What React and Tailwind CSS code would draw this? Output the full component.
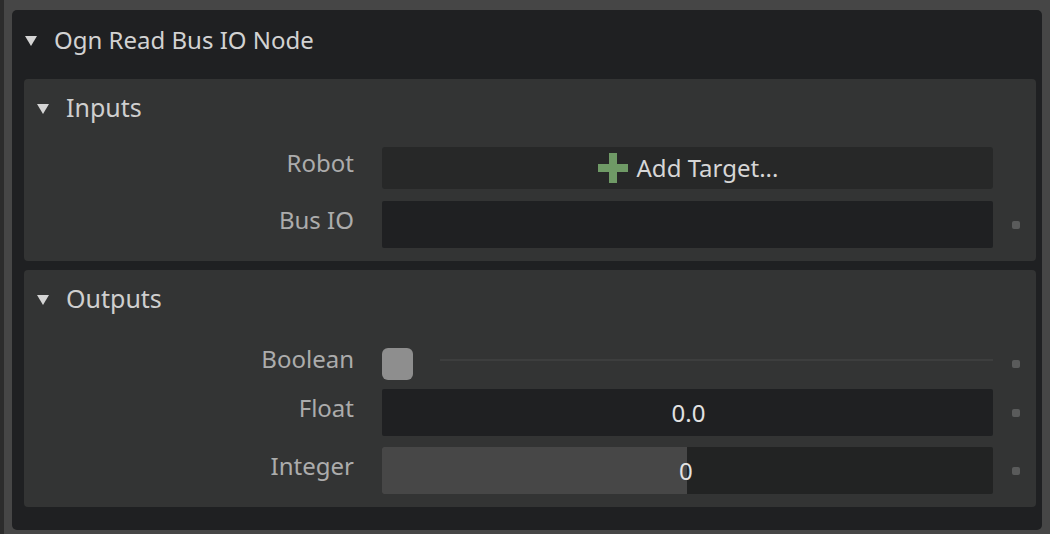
import React from "react";

const font = { fontFamily: "'Noto Sans', 'Open Sans', sans-serif" };

function Caret({ className = "" }) {
  return (
    <svg width="12" height="10" viewBox="0 0 12 10" className={className}>
      <path d="M0 0 H12 L6 10 Z" fill="#d4d4d4" />
    </svg>
  );
}

function Dot() {
  return (
    <div className="w-[43px] flex justify-center pl-[3px]">
      <div className="w-[8px] h-[8px] rounded-[2px] bg-[#5a5b5b]" />
    </div>
  );
}

function Row({ label, children, dot = true, className = "" }) {
  return (
    <div className={`flex items-center ${className}`}>
      <div className="w-[331px] text-right pr-[1px] text-[24px] leading-none text-[#acacac] -translate-y-[5px]">
        {label}
      </div>
      <div className="w-[27px]" />
      <div className="w-[611px] h-full flex">{children}</div>
      {dot ? <Dot /> : <div className="w-[43px]" />}
    </div>
  );
}

function SectionTitle({ title }) {
  return (
    <div className="flex items-center h-[58px] pl-[13px] pt-[2px]">
      <Caret className="mr-[17px]" />
      <span className="text-[25px] leading-none text-[#cfcfcf] -translate-y-[2px]">{title}</span>
    </div>
  );
}

export default function App() {
  return (
    <div className="w-[1050px] h-[534px] bg-[#464646] flex" style={font}>
      <div className="w-[4px] bg-[#2c2c2c]" />
      <div className="flex-1 pl-[8px] pr-[8px] pt-[10px] pb-[4px]">
        <div className="h-full bg-[#1f2022] rounded-[5px] pl-[12px] pr-[6px] flex flex-col">
          {/* node header */}
          <div className="h-[69px] flex items-center pl-[1px] pb-[8px]">
            <Caret className="mr-[17px]" />
            <span className="text-[24px] leading-none text-[#d2d2d2] -translate-y-[1px]">Ogn Read Bus IO Node</span>
          </div>

          {/* inputs */}
          <div className="h-[182px] bg-[#333434] rounded-[4px] flex flex-col">
            <SectionTitle title="Inputs" />
            <div className="h-[10px]" />
            <Row label="Robot" dot={false} className="h-[42px]">
              <div className="flex-1 rounded-[3px] bg-[#272828] flex items-center justify-center gap-[8px]">
                <svg width="32" height="32" viewBox="0 0 32 32">
                  <path d="M12 1 H20 V12 H31 V20 H20 V31 H12 V20 H1 V12 H12 Z" fill="#6f9a66" />
                </svg>
                <span className="text-[24px] leading-none text-[#d6d6d6]">Add Target...</span>
              </div>
            </Row>
            <div className="h-[12px]" />
            <Row label="Bus IO" className="h-[47px]">
              <div className="flex-1 rounded-[2px] bg-[#1f2022]" />
            </Row>
          </div>

          <div className="h-[9px]" />

          {/* outputs */}
          <div className="h-[237px] bg-[#333434] rounded-[4px] flex flex-col">
            <SectionTitle title="Outputs" />
            <div className="h-[20px]" />
            <Row label="Boolean" className="h-[32px]">
              <div className="flex-1 flex items-center">
                <div className="w-[31px] h-[32px] rounded-[6px] bg-[#8e8e8e]" />
                <div className="flex-1 ml-[27px] h-[2px] bg-[#3d3e3e] -translate-y-[4px]" />
              </div>
            </Row>
            <div className="h-[9px]" />
            <Row label="Float" className="h-[47px]">
              <div className="flex-1 rounded-[2px] bg-[#1f2022] flex items-center justify-center">
                <span className="text-[24px] leading-none text-[#e2e2e2] pl-[2px]">0.0</span>
              </div>
            </Row>
            <div className="h-[11px]" />
            <Row label="Integer" className="h-[47px]">
              <div className="flex-1 rounded-[2px] bg-[#222323] flex items-center relative">
                <div className="w-[305px] h-full bg-[#474747] rounded-l-[2px]" />
                <span className="absolute left-[297px] text-[24px] leading-none text-[#e2e2e2]">0</span>
              </div>
            </Row>
          </div>
        </div>
      </div>
    </div>
  );
}
